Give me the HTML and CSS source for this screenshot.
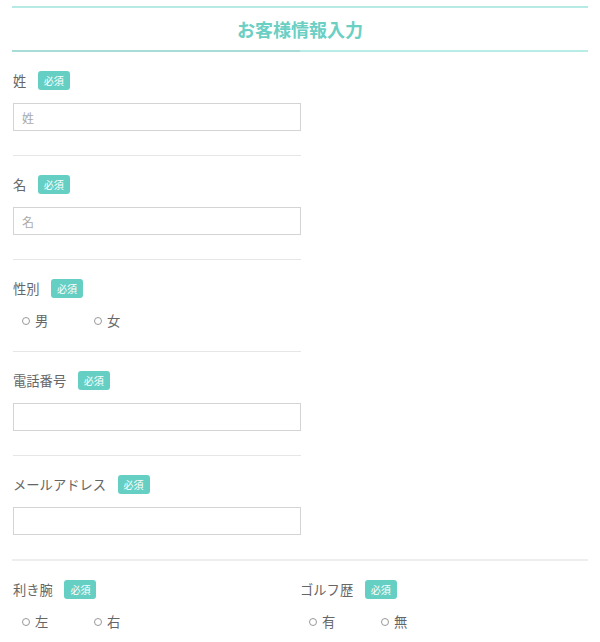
FILE: index.html
```html
<!DOCTYPE html>
<html lang="ja">
<head>
<meta charset="utf-8">
<title>お客様情報入力</title>
<link rel="stylesheet" href="styles.css">
</head>
<body>
<div class="page">
  <h1 class="title">お客様情報入力</h1>
  <div class="fields">
    <div class="field">
      <div class="label-row"><span class="label">姓</span><span class="badge">必須</span></div>
      <input class="text-input" type="text" placeholder="姓">
    </div>
    <div class="field">
      <div class="label-row"><span class="label">名</span><span class="badge">必須</span></div>
      <input class="text-input" type="text" placeholder="名">
    </div>
    <div class="field field-radio">
      <div class="label-row"><span class="label">性別</span><span class="badge">必須</span></div>
      <div class="radios">
        <span class="radio"><span class="dot"></span>男</span>
        <span class="radio"><span class="dot"></span>女</span>
      </div>
    </div>
    <div class="field">
      <div class="label-row"><span class="label">電話番号</span><span class="badge">必須</span></div>
      <input class="text-input" type="text">
    </div>
    <div class="field field-last">
      <div class="label-row"><span class="label">メールアドレス</span><span class="badge">必須</span></div>
      <input class="text-input" type="text">
    </div>
  </div>
  <div class="two-col">
    <div class="field field-radio field-col">
      <div class="label-row"><span class="label">利き腕</span><span class="badge">必須</span></div>
      <div class="radios">
        <span class="radio"><span class="dot"></span>左</span>
        <span class="radio"><span class="dot"></span>右</span>
      </div>
    </div>
    <div class="field field-radio field-col">
      <div class="label-row"><span class="label">ゴルフ歴</span><span class="badge">必須</span></div>
      <div class="radios">
        <span class="radio"><span class="dot"></span>有</span>
        <span class="radio"><span class="dot"></span>無</span>
      </div>
    </div>
  </div>
</div>
</body>
</html>
```
FILE: styles.css
```css
* { box-sizing: border-box; }
html, body { margin: 0; padding: 0; background: #fff; }
body {
  font-family: "Noto Sans CJK JP", "Noto Sans", "Liberation Sans", sans-serif;
  color: #666;
}
.page {
  padding: 6px 12px 0 12px;
}
.title {
  position: relative;
  margin: 0;
  height: 46px;
  border-top: 2px solid #b5ebe4;
  border-bottom: 2px solid #b8ece6;
  text-align: center;
  font-size: 18px;
  font-weight: bold;
  line-height: 42px;
  color: #6bcfc4;
}
.title::after {
  content: "";
  position: absolute;
  left: 0;
  bottom: -2px;
  width: 50%;
  height: 2px;
  background: #a8dcd7;
}
.fields {
  width: 288px;
  margin-left: 1px;
}
.field {
  padding: 19px 0 24px 0;
  border-bottom: 1px solid #e6e6e6;
}
.field-radio {
  padding-bottom: 20px;
}
.field-last {
  border-bottom: none;
}
.label-row {
  display: flex;
  align-items: center;
  height: 19px;
  margin-bottom: 13px;
}
.label {
  font-size: 13.3px;
  line-height: 19px;
  color: #666;
}
.badge {
  margin-left: 11.5px;
  width: 32px;
  height: 19px;
  border-radius: 3px;
  background: #66cfc4;
  color: #fff;
  font-size: 10px;
  line-height: 19px;
  text-align: center;
}
.text-input {
  display: block;
  width: 288px;
  height: 28px;
  margin: 0;
  padding: 0 8px;
  border: 1px solid #d4d4d4;
  border-radius: 0;
  font-family: inherit;
  font-size: 12px;
  color: #666;
  background: #fff;
  outline: none;
}
.text-input::placeholder {
  color: #aaa;
}
.radios {
  display: flex;
  height: 20px;
  align-items: center;
  padding-left: 9px;
}
.radio {
  display: flex;
  align-items: center;
  width: 72px;
  font-size: 13.3px;
  line-height: 20px;
  color: #666;
}
.dot {
  width: 8px;
  height: 8px;
  border: 1px solid #999;
  border-radius: 50%;
  margin-right: 5px;
}
.two-col {
  display: flex;
  border-top: 2px solid #eeeeee;
}
.field-col {
  width: 288px;
  border-bottom: none;
}
.field-col:first-child {
  margin-left: 1px;
}
.field-col + .field-col {
  margin-left: -1px;
}
```
